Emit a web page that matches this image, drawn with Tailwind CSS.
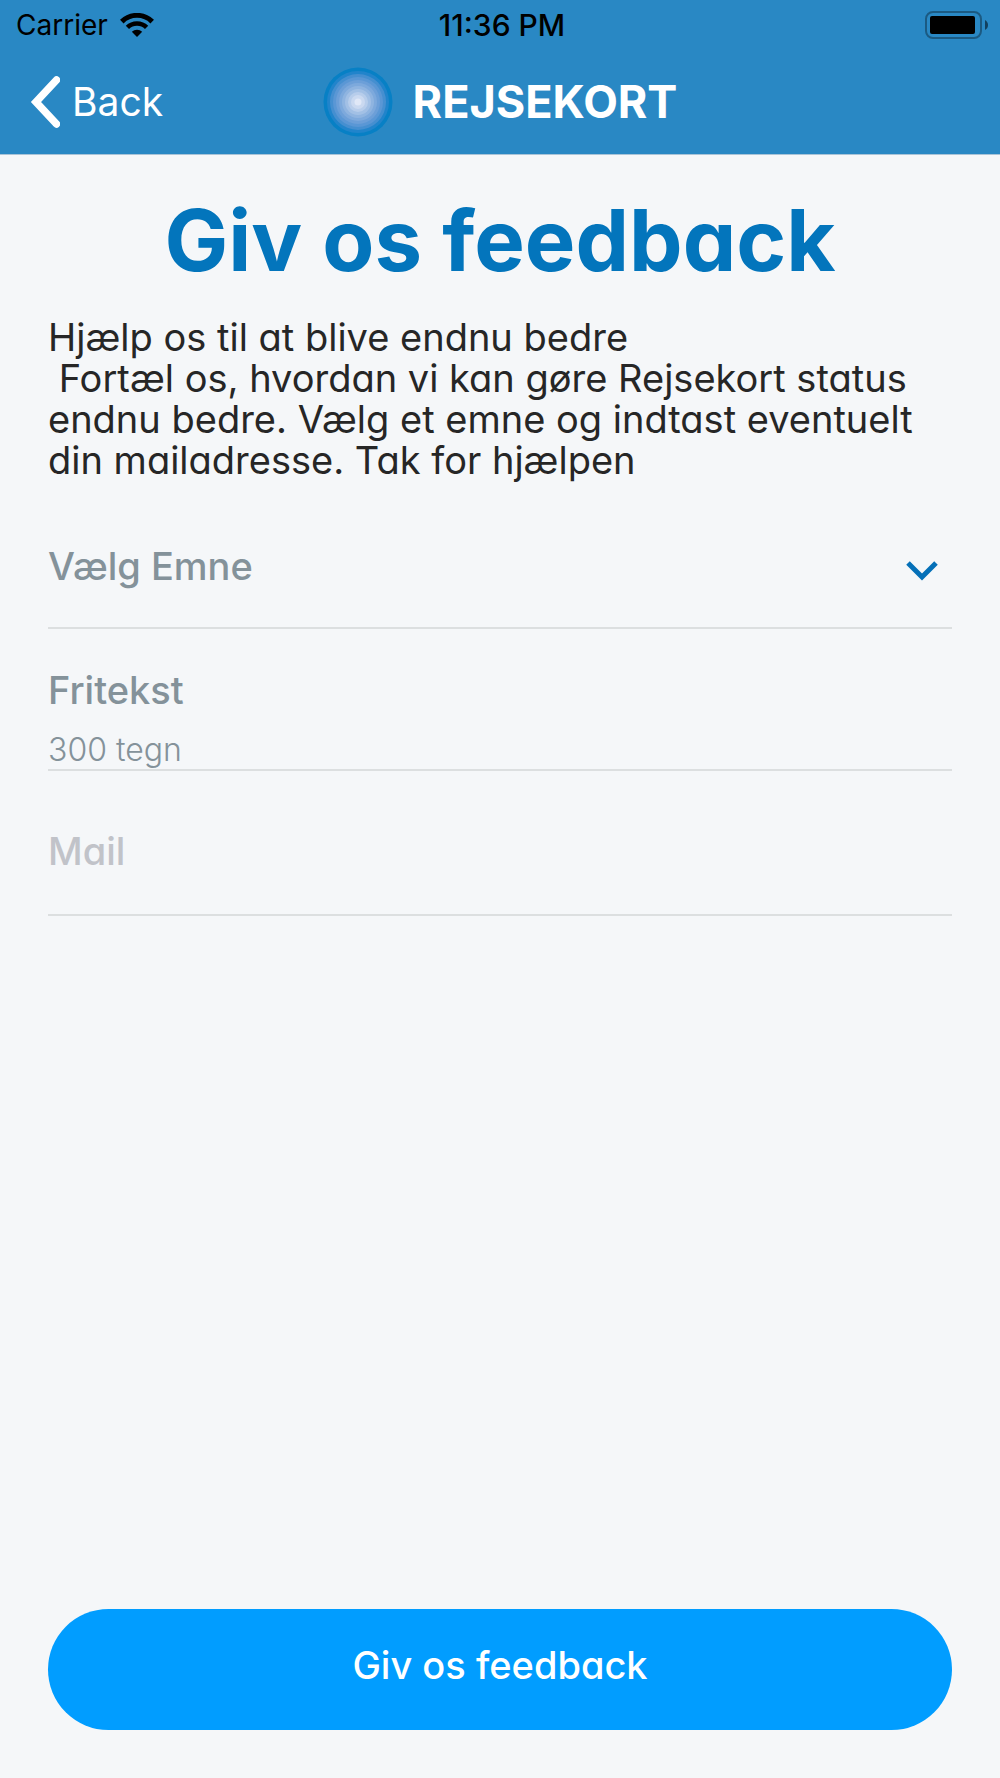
<!DOCTYPE html>
<html lang="da">
  <head>
    <meta charset="UTF-8" />
    <title>Giv os feedback</title>
    <meta name="viewport" content="width=device-width, initial-scale=1.0" />
    <script src="https://cdn.jsdelivr.net/npm/@tailwindcss/browser@4"></script>
  </head>
  <body
    class="flex min-h-screen flex-col bg-[#f5f7f9] font-['Inter','Liberation_Sans',sans-serif] text-[#262626]"
  >
    <!-- header -->
    <header class="border-b border-[#a9c4d8] bg-[#2988c4]">
      <!-- status bar -->
      <div class="grid h-[50px] grid-cols-3 items-center pr-3 pl-4 text-[28px] text-black">
        <div class="flex items-center gap-3">
          <span>Carrier</span>
          <svg class="h-6 w-[34px]" viewBox="0 0 34 24" fill="none" stroke="#000">
            <path d="M1.8 8.6 A21.6 21.6 0 0 1 32.2 8.6" stroke-width="5" />
            <path d="M7.4 14.4 A13.6 13.6 0 0 1 26.6 14.4" stroke-width="4.6" />
            <path d="M17 24 L11.8 18.8 A7.4 7.4 0 0 1 22.2 18.8 Z" fill="#000" stroke="none" />
          </svg>
        </div>
        <span class="text-center text-[30px] font-medium">11:36 PM</span>
        <svg class="h-7 w-16 justify-self-end" viewBox="0 0 64 28">
          <rect x="2" y="1" width="55" height="26" rx="7" fill="none" stroke="#1b5a82" stroke-width="2" />
          <rect x="6" y="5" width="45" height="18" rx="2" />
          <path d="M61 9 C65 11 65 17 61 19 Z" fill="#12405e" />
        </svg>
      </div>

      <!-- navigation bar -->
      <div class="grid h-[104px] grid-cols-[1fr_auto_1fr] items-center px-[30px] text-white">
        <button type="button" class="flex items-center gap-3 justify-self-start text-[39px] leading-[50px]">
          <svg class="h-[52px] w-[30px]" viewBox="0 0 30 52" fill="none" stroke="#fff" stroke-width="7.5" stroke-linecap="round" stroke-linejoin="miter">
            <path d="M26.5 4 L6 26 L26.5 48" />
          </svg>
          Back
        </button>
        <div class="flex items-center gap-5">
          <svg class="h-[70px] w-[70px]" viewBox="0 0 70 70">
            <circle cx="35" cy="35" r="34.5" fill="#0780c5" />
            <circle cx="35" cy="35" r="31" fill="#2184cb" />
            <circle cx="35" cy="35" r="28" fill="#458fd0" />
            <circle cx="35" cy="35" r="25" fill="#5a97d5" />
            <circle cx="35" cy="35" r="22" fill="#6c9fd8" />
            <circle cx="35" cy="35" r="19" fill="#7da9dc" />
            <circle cx="35" cy="35" r="16" fill="#8fb4e0" />
            <circle cx="35" cy="35" r="13" fill="#a2c0e5" />
            <circle cx="35" cy="35" r="10" fill="#b7cdeb" />
            <circle cx="35" cy="35" r="7" fill="#cad9f0" />
            <circle cx="35" cy="35" r="3.5" fill="#e0e8f7" />
          </svg>
          <span class="text-[45px] leading-[50px] font-bold">REJSEKORT</span>
        </div>
      </div>
    </header>

    <!-- feedback form -->
    <form class="flex grow flex-col px-12 pt-9 pb-12 [font-feature-settings:'cv11']">
      <h1 class="text-center text-[85px] leading-[100px] font-bold text-[#0375bc]">
        Giv os feedback
      </h1>
      <p class="mt-[26px] text-[38px] leading-[41px]">
        Hjælp os til at blive endnu bedre<br />&nbsp;Fortæl os, hvordan vi kan gøre Rejsekort status endnu bedre. Vælg et emne og indtast eventuelt din mailadresse. Tak for hjælpen
      </p>

      <div class="mt-10 flex h-[108px] items-start border-b-2 border-[#dcdfe0] pt-5">
        <select
          aria-label="Vælg Emne"
          class="h-[50px] grow appearance-none text-[38px] leading-[50px] font-medium text-[#84929a] outline-none"
        >
          <option>Vælg Emne</option>
        </select>
        <svg class="mt-5 mr-[14px] h-5 w-8" viewBox="0 0 32 20" fill="none" stroke="#0570b8" stroke-width="5">
          <path d="M2 2 L16 16 L30 2" />
        </svg>
      </div>

      <label for="message" class="mt-9 text-[38px] leading-[50px] font-medium text-[#84929a]">Fritekst</label>
      <input
        id="message"
        type="text"
        maxlength="300"
        placeholder="300 tegn"
        class="mt-4 h-10 border-b-2 border-[#dcdfe0] text-[32px] font-light outline-none placeholder:text-[#84929a]"
      />

      <input
        type="email"
        aria-label="Mail"
        placeholder="Mail"
        class="mt-10 h-[105px] border-b-2 border-[#dcdfe0] pb-6 text-[38px] font-medium outline-none placeholder:text-[#c1c3c9]"
      />

      <button type="submit" class="mt-auto h-[121px] rounded-full bg-[#019dff] pb-2 text-[38px] font-medium text-white">
        Giv os feedback
      </button>
    </form>
  </body>
</html>
